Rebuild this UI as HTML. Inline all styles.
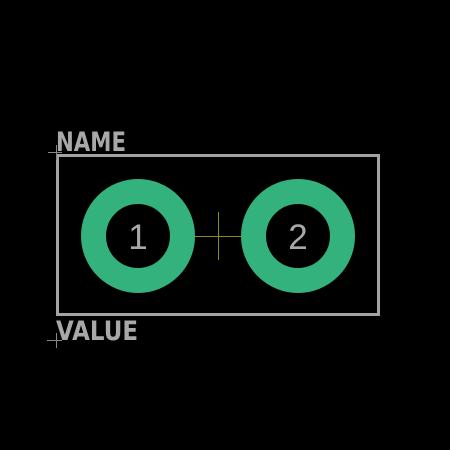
<!DOCTYPE html>
<html><head><style>
html,body{margin:0;padding:0;background:#000;width:450px;height:450px;overflow:hidden}
</style></head><body>
<svg width="450" height="450" viewBox="0 0 450 450" xmlns="http://www.w3.org/2000/svg">
<rect width="450" height="450" fill="#000"/>
<rect x="57.5" y="155.5" width="321" height="159" fill="none" stroke="#a3a3a3" stroke-width="3"/>
<circle cx="138" cy="236" r="44.5" fill="none" stroke="#33b27e" stroke-width="25"/>
<circle cx="298" cy="236" r="44.5" fill="none" stroke="#33b27e" stroke-width="25"/>
<line x1="195" y1="236.5" x2="242" y2="236.5" stroke="#8a8a20" stroke-width="1"/>
<line x1="218.5" y1="212" x2="218.5" y2="260" stroke="#8a8a20" stroke-width="1"/>
<line x1="48" y1="152.5" x2="62" y2="152.5" stroke="#888" stroke-width="1"/>
<line x1="56.5" y1="145" x2="56.5" y2="160" stroke="#888" stroke-width="1"/>
<line x1="47" y1="340.5" x2="62" y2="340.5" stroke="#888" stroke-width="1"/>
<line x1="56.5" y1="333" x2="56.5" y2="348" stroke="#888" stroke-width="1"/>
<text x="138" y="249" text-anchor="middle" font-family="Liberation Sans, sans-serif" font-size="35" fill="#a8a8a8">1</text>
<text x="298" y="249" text-anchor="middle" font-family="Liberation Sans, sans-serif" font-size="35" fill="#a8a8a8">2</text>
<text x="56" y="151" font-family="DejaVu Sans, sans-serif" font-weight="bold" font-size="27" fill="#a8a8a8" textLength="70" lengthAdjust="spacingAndGlyphs">NAME</text>
<text x="56" y="340" font-family="DejaVu Sans, sans-serif" font-weight="bold" font-size="27" fill="#a8a8a8" textLength="82" lengthAdjust="spacingAndGlyphs">VALUE</text>
</svg>
</body></html>
